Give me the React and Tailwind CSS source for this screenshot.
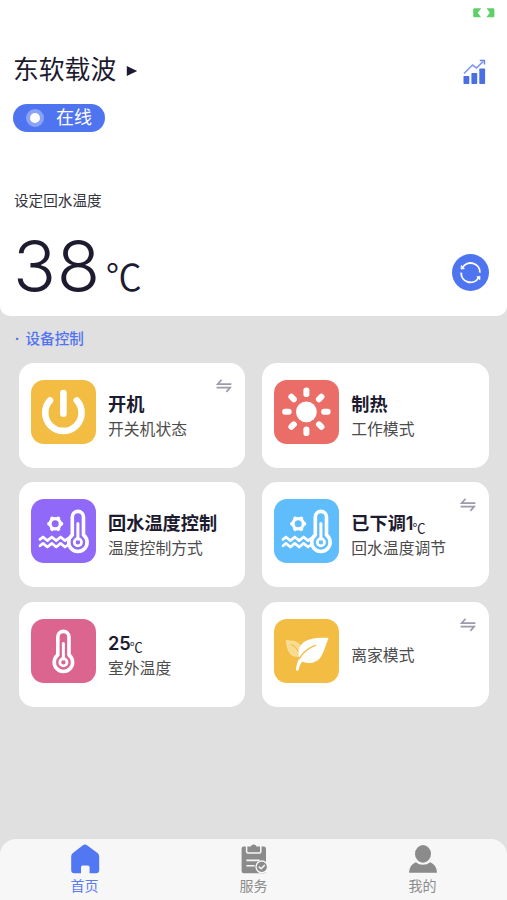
import React from "react";

const SwapIcon = () => (
  <svg width="16" height="14" viewBox="0 0 16 14" fill="none" stroke="#9a9cab" strokeWidth="1.7">
    <path d="M5.6 0.8 L1.6 5.2 H15.4" />
    <path d="M0.6 8.6 H14.2 L10.4 12.9" />
  </svg>
);

const ChartIcon = () => (
  <svg width="24" height="26" viewBox="0 0 24 26">
    <path d="M1 14.5 L9.5 6 L13.5 9 L20 2.6" fill="none" stroke="#7f97ef" strokeWidth="1.6" />
    <path d="M16.8 1.4 H21.4 V5.6" fill="none" stroke="#6482ee" strokeWidth="1.5" />
    <rect x="0.5" y="17" width="5.8" height="8" rx="0.8" fill="#4a6fe5" />
    <rect x="8.4" y="14" width="5.8" height="11" rx="0.8" fill="#4a6fe5" />
    <rect x="16.3" y="9.5" width="5.8" height="15.5" rx="0.8" fill="#4a6fe5" />
  </svg>
);

const BatteryIcon = () => (
  <svg width="22" height="10" viewBox="0 0 22 10" fill="#5fd068">
    <path d="M1.5 0.3 H8.2 L4.8 4.8 L8 9.3 H1.5 Q0.2 9.3 0.2 8 V1.6 Q0.2 0.3 1.5 0.3Z" />
    <path d="M13.6 0.3 H20 Q21.4 0.3 21.4 1.6 V8 Q21.4 9.3 20 9.3 H13.4 L16.8 4.8Z" />
  </svg>
);

const RefreshIcon = () => (
  <svg width="37" height="37" viewBox="0 0 37 37" fill="none" stroke="#fff" strokeWidth="1.9">
    <path d="M10.6 13.6 A9.3 9.3 0 0 1 27.9 18.6" />
    <path d="M26.6 23.6 A9.3 9.3 0 0 1 9.2 18.6" />
    <path d="M9.4 11.4 L9 15 L12.4 14.7Z M27.8 25.8 L28 22.4 L24.8 22.8Z" fill="#fff" strokeWidth="0.8" />
  </svg>
);

const PowerIcon = () => (
  <svg className="size-full" viewBox="0 0 65 64" fill="none" stroke="#fff" strokeWidth="6.6" strokeLinecap="round">
    <path d="M32.4 13 V33.8" />
    <path d="M19 20.4 A18.2 18.2 0 1 0 45.8 20.4" />
  </svg>
);

const SUN_ANGLES = [0, 45, 90, 135, 180, 225, 270, 315];

const SunIcon = () => (
  <svg className="size-full" viewBox="0 0 65 64" fill="#fff">
    <circle cx="32.4" cy="31.8" r="10.4" />
    {SUN_ANGLES.map((angle) => (
      <rect
        key={angle}
        x="29.4"
        y="7.6"
        width="6"
        height="9.4"
        rx="2.8"
        transform={`rotate(${angle} 32.4 31.8)`}
      />
    ))}
  </svg>
);

const Thermometer = ({ x }) => (
  <g transform={`translate(${x} 0)`} fill="none" stroke="#fff">
    <path
      d="M-5.6 36 V18 A5.6 5.6 0 0 1 5.6 18 V36 A9.2 9.2 0 1 1 -5.6 36Z"
      strokeWidth="3.6"
      strokeLinejoin="round"
    />
    <circle cx="0" cy="43.3" r="3.6" strokeWidth="2.8" />
    <path d="M0 40 V24.5" strokeWidth="3" strokeLinecap="round" />
  </g>
);

const GEAR_ANGLES = [0, 60, 120, 180, 240, 300];

const WaterTempIcon = () => (
  <svg className="size-full" viewBox="0 0 65 64" fill="none" stroke="#fff">
    <circle cx="24.2" cy="24.8" r="5.1" strokeWidth="3.2" />
    {GEAR_ANGLES.map((angle) => (
      <circle
        key={angle}
        cx="30.3"
        cy="24.8"
        r="2"
        fill="#fff"
        stroke="none"
        transform={`rotate(${angle} 24.2 24.8)`}
      />
    ))}
    <path d="M9 40.4 l3 -2.4 l4.4 3.6 l4.4 -3.6 l4.4 3.6 l4.4 -3.6 l4.4 3.6 l3.4 -2.4" strokeWidth="2.7" strokeLinejoin="round" strokeLinecap="round" />
    <path d="M9 46.8 l3 -2.4 l4.4 3.6 l4.4 -3.6 l4.4 3.6 l4.4 -3.6 l4.4 3.6 l2.4 -1.6" strokeWidth="2.7" strokeLinejoin="round" strokeLinecap="round" />
    <Thermometer x={46.9} />
  </svg>
);

const OutdoorTempIcon = () => (
  <svg className="size-full" viewBox="0 0 65 64">
    <Thermometer x={32.4} />
  </svg>
);

const LeafIcon = () => (
  <svg className="size-full" viewBox="0 0 65 64">
    <path d="M11.8 21 C19 21.3 24.5 22.5 27 26.5 C24.5 30 24 34 24.4 38 C17 38.5 12.5 33 11.8 21Z" fill="#f9dc93" />
    <path d="M17 25.5 C20.5 27 23 29.5 24.5 33" fill="none" stroke="#f2bd42" strokeWidth="1.2" />
    <path d="M54.6 19 C43 18.4 32.5 19.6 27.4 25.4 C24 29.4 24 34.6 25.2 39.5 C23.3 43 22.2 47 22 50.2 C22.3 52.4 24.2 52.2 24.7 50.4 C25.3 47.4 26.4 45 28.2 42.6 C34.4 45.6 42.8 44 46.8 38 C50.6 32.3 51.6 25.5 54.6 19Z" fill="#fff" />
    <path d="M25.4 39.6 C28.6 34 34 29 41.4 26.4" fill="none" stroke="#f2bd42" strokeWidth="1.4" strokeLinecap="round" />
  </svg>
);

const HomeIcon = () => (
  <svg width="30" height="30" viewBox="0 0 30 30" fill="#5277f2">
    <path d="M12.6 1.4 Q15 -0.4 17.4 1.4 L27.8 9.3 Q29.2 10.5 29.2 12.4 V26 Q29.2 29.2 26 29.2 H19.6 V23.4 Q19.6 21.6 17.8 21.6 H12.8 Q11 21.6 11 23.4 V29.2 H4.4 Q1.2 29.2 1.2 26 V12.4 Q1.2 10.5 2.6 9.3Z" />
  </svg>
);

const ServiceIcon = () => (
  <svg width="28" height="30" viewBox="0 0 28 30">
    <rect x="1.6" y="2.6" width="24.4" height="26.6" rx="2.2" fill="#8b8b8b" />
    <path d="M6.6 2 V7.6 Q6.6 9.1 8.1 9.1 H19.3 Q20.8 9.1 20.8 7.6 V2" fill="none" stroke="#f7f7f7" strokeWidth="1.5" />
    <path d="M8.2 3.4 H10.6 Q11.2 0.6 13.7 0.6 Q16.2 0.6 16.8 3.4 H19.2 V7.4 H8.2Z" fill="#8b8b8b" />
    <path d="M6.4 16.4 H19.5 M6.4 21.8 H14.5" stroke="#f7f7f7" strokeWidth="1.6" />
    <circle cx="21.8" cy="22.8" r="5.8" fill="#8b8b8b" stroke="#f7f7f7" strokeWidth="1.4" />
    <path d="M18.9 22.6 L21.2 24.8 L24.8 21" fill="none" stroke="#f7f7f7" strokeWidth="1.5" />
  </svg>
);

const UserIcon = () => (
  <svg width="30" height="30" viewBox="0 0 30 30" fill="#8b8b8b">
    <ellipse cx="15" cy="9.9" rx="8" ry="8.8" />
    <path d="M1 28.8 Q1.2 20.8 7.8 18.2 Q10.8 20.8 15 20.8 Q19.2 20.8 22.2 18.2 Q28.8 20.8 29 28.8Z" />
  </svg>
);

const devices = [
  { title: "开机", label: "开关机状态", color: "bg-[#f2bd42]", Icon: PowerIcon, swap: true },
  { title: "制热", label: "工作模式", color: "bg-[#ea6d67]", Icon: SunIcon },
  { title: "回水温度控制", label: "温度控制方式", color: "bg-[#9069f8]", Icon: WaterTempIcon },
  { title: "已下调1", unit: "℃", label: "回水温度调节", color: "bg-[#60bdfb]", Icon: WaterTempIcon, swap: true },
  { title: "25", unit: "℃", label: "室外温度", color: "bg-[#db658f]", Icon: OutdoorTempIcon },
  { label: "离家模式", color: "bg-[#f2bd42]", Icon: LeafIcon, swap: true },
];

const tabs = [
  { label: "首页", Icon: HomeIcon, active: true },
  { label: "服务", Icon: ServiceIcon },
  { label: "我的", Icon: UserIcon },
];

const DeviceCard = ({ title, unit, label, color, Icon, swap }) => (
  <div className="relative flex h-[105px] rounded-[15px] bg-white pl-3 pt-[17px]">
    <div className={`h-16 w-[65px] shrink-0 rounded-[13px] ${color}`}>
      <Icon />
    </div>
    <div className="ml-3 mt-[5px] flex h-16 flex-col justify-center">
      {title && (
        <p className="flex h-[25px] items-center whitespace-nowrap font-['Inter','Noto_Sans_CJK_SC',sans-serif] text-[18.2px] font-semibold leading-[25px] text-[#1d1b30]">
          {title}
          {unit && (
            <span className="-ml-px mt-[7px] font-['Noto_Sans_CJK_SC'] text-[13px] font-normal">{unit}</span>
          )}
        </p>
      )}
      <p className="h-[25px] whitespace-nowrap text-[15.8px] leading-[25px] text-[#4c4c4c]">{label}</p>
    </div>
    {swap && (
      <div className="absolute right-[13px] top-4">
        <SwapIcon />
      </div>
    )}
  </div>
);

export default function App() {
  return (
    <div className="flex h-[900px] w-[507px] flex-col overflow-hidden bg-[#e0e0e0] font-['Liberation_Sans','Noto_Sans_CJK_SC',sans-serif]">
      <header className="h-[316px] shrink-0 rounded-b-[10px] bg-white pl-[13px] pr-[18px]">
        <div className="flex h-[52px] justify-end pt-2">
          <div className="-mr-1.5">
            <BatteryIcon />
          </div>
        </div>
        <div className="flex h-9 items-center justify-between">
          <h1 className="flex items-center text-[25.8px] leading-9 text-[#1d1b30]">
            东软载波
            <svg className="ml-2.5 mt-0.5" width="12" height="12" viewBox="0 0 12 12" fill="#1d1b30">
              <path d="M0.8 1 L11.2 6 L0.8 11Z" />
            </svg>
          </h1>
          <div className="mt-1 pr-0.5">
            <ChartIcon />
          </div>
        </div>
        <div className="mt-4 flex h-7 w-[92px] items-center rounded-full bg-[#4f74f0] pl-[13px] text-white">
          <span className="flex size-[18px] items-center justify-center rounded-full bg-[#8ba3f6]">
            <span className="size-2.5 rounded-full bg-white" />
          </span>
          <span className="ml-3 text-[18px] leading-7">在线</span>
        </div>
        <p className="mt-[59px] h-5 pl-px text-[14.6px] leading-5 text-[#333340]">设定回水温度</p>
        <div className="mt-4 flex h-[78px] items-start justify-between">
          <div className="flex items-start text-[#1d1b30]">
            <span className="font-['Inter'] text-[71px] font-[350] leading-[78px] tracking-[0.01em]">38</span>
            <span className="ml-[5px] mt-[26px] font-['Noto_Sans_CJK_SC'] text-[36px] font-[350] leading-[44px]">℃</span>
          </div>
          <div className="mt-[27px] size-[37px] rounded-full bg-[#4f74f0]">
            <RefreshIcon />
          </div>
        </div>
      </header>

      <main className="flex-1">
        <h2 className="mt-3 flex h-[22px] items-center pl-[15px] text-[14.6px] font-medium leading-[22px] text-[#5273f0]">
          <span className="w-[10.5px] font-bold">·</span>设备控制
        </h2>
        <div className="mt-[12.5px] grid grid-cols-2 gap-x-[17px] gap-y-[14.7px] pl-[19px] pr-[18.5px]">
          {devices.map((device) => (
            <DeviceCard key={device.label} {...device} />
          ))}
        </div>
      </main>

      <nav className="grid h-[61px] shrink-0 grid-cols-3 rounded-t-[16px] bg-[#f7f7f7] pt-[5px]">
        {tabs.map(({ label, Icon, active }) => (
          <div key={label} className="flex flex-col items-center">
            <Icon />
            <span className={`mt-0.5 text-[14px] leading-5 ${active ? "text-[#5b7cf0]" : "text-[#8b8b8b]"}`}>
              {label}
            </span>
          </div>
        ))}
      </nav>
    </div>
  );
}
